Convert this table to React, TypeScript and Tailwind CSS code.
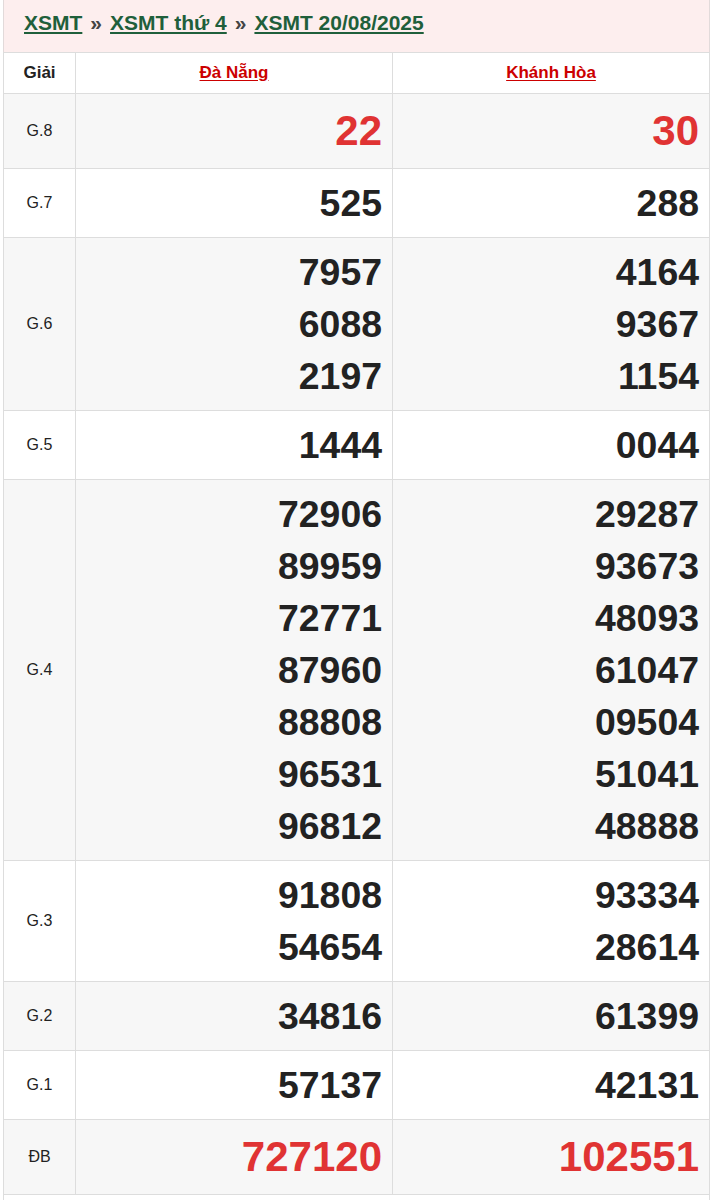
const rows: { label: string; big?: boolean; a: string[]; b: string[] }[] = [
  { label: 'G.8', big: true, a: ['22'], b: ['30'] },
  { label: 'G.7', a: ['525'], b: ['288'] },
  { label: 'G.6', a: ['7957', '6088', '2197'], b: ['4164', '9367', '1154'] },
  { label: 'G.5', a: ['1444'], b: ['0044'] },
  {
    label: 'G.4',
    a: ['72906', '89959', '72771', '87960', '88808', '96531', '96812'],
    b: ['29287', '93673', '48093', '61047', '09504', '51041', '48888'],
  },
  { label: 'G.3', a: ['91808', '54654'], b: ['93334', '28614'] },
  { label: 'G.2', a: ['34816'], b: ['61399'] },
  { label: 'G.1', a: ['57137'], b: ['42131'] },
  { label: 'ĐB', big: true, a: ['727120'], b: ['102551'] },
];

function Numbers({ items, big }: { items: string[]; big?: boolean }) {
  return (
    <div className="flex flex-col items-end justify-center py-2 pr-[10px] border-l border-[#dddddd]">
      {items.map((n, i) => (
        <span
          key={i}
          className={
            big
              ? 'text-[42px] leading-[58px] font-bold text-[#e03333]'
              : 'text-[37.4px] leading-[52px] font-bold text-[#222222]'
          }
        >
          {n}
        </span>
      ))}
    </div>
  );
}

export default function App() {
  return (
    <div className="min-h-[1200px] bg-white font-['Liberation_Sans',Arial,sans-serif]">
      <div className="ml-[3px] w-[707px]">
        {/* breadcrumb */}
        <div className="h-[52px] bg-[#fdeeee] border-x border-[#e2dada] pt-[9px] pl-[20px] text-[21px] leading-[28px] font-bold">
          <a href="#" className="text-[#1f5f3b] underline underline-offset-2">XSMT</a>
          <span className="text-[#444] mx-[8px]">»</span>
          <a href="#" className="text-[#1f5f3b] underline underline-offset-2">XSMT thứ 4</a>
          <span className="text-[#444] mx-[8px]">»</span>
          <a href="#" className="text-[#1f5f3b] underline underline-offset-2">XSMT 20/08/2025</a>
        </div>

        {/* table */}
        <div className="border border-[#dddddd]">
          <div className="grid grid-cols-[71px_1fr_1fr] h-[40px] items-stretch bg-white text-[17px] font-bold">
            <div className="flex items-center justify-center text-[#222]">Giải</div>
            <div className="flex items-center justify-center border-l border-[#dddddd]">
              <a href="#" className="text-[#cc0000] underline underline-offset-2">Đà Nẵng</a>
            </div>
            <div className="flex items-center justify-center border-l border-[#dddddd]">
              <a href="#" className="text-[#cc0000] underline underline-offset-2">Khánh Hòa</a>
            </div>
          </div>
          {rows.map((r, i) => (
            <div
              key={r.label}
              className={
                'grid grid-cols-[71px_1fr_1fr] border-t border-[#dddddd] ' +
                (i % 2 === 0 ? 'bg-[#f7f7f7]' : 'bg-white')
              }
            >
              <div className="flex items-center justify-center text-[16px] text-[#222]">{r.label}</div>
              <Numbers items={r.a} big={r.big} />
              <Numbers items={r.b} big={r.big} />
            </div>
          ))}
          <div className="h-[6px] border-t border-[#dddddd] bg-white" />
        </div>
      </div>
    </div>
  );
}
